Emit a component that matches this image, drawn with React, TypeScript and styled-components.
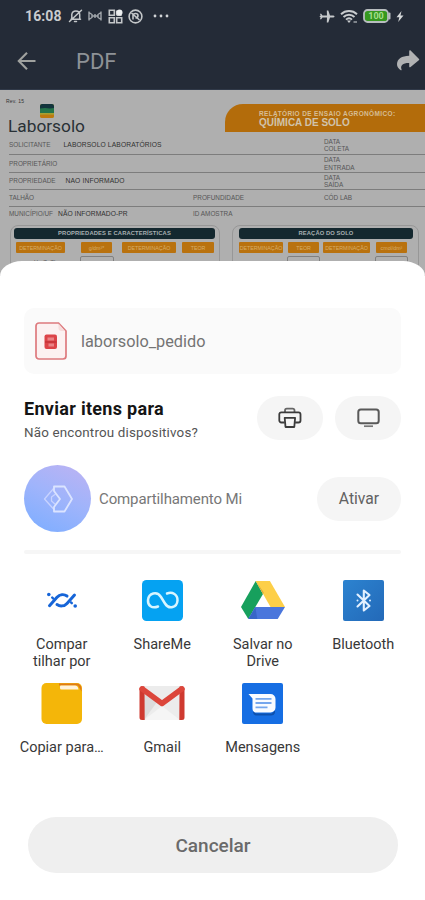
import React from "react";
import styled, { createGlobalStyle } from "styled-components";

const Global = createGlobalStyle`
  * { box-sizing: border-box; }
  body { margin: 0; background: #fff; font-family: Roboto, "Noto Sans", sans-serif; }
  button { font: inherit; border: 0; padding: 0; }
`;

const Screen = styled.div`
  width: 425px;
  height: 900px;
  overflow: hidden;
  display: flex;
  flex-direction: column;
  background: #242b37;
`;

const Text = styled.span<{ $size: number; $color?: string; $weight?: number; $track?: number; $line?: number }>`
  display: block;
  white-space: nowrap;
  font-size: ${p => p.$size}px;
  color: ${p => p.$color ?? "#444"};
  font-weight: ${p => p.$weight ?? 400};
  letter-spacing: ${p => p.$track ?? 0}px;
  line-height: ${p => p.$line ?? Math.round(p.$size * 1.2)}px;
`;

/* Status bar and app bar */
const StatusBar = styled.div`
  height: 32px;
  flex: none;
  display: flex;
  align-items: center;
  padding: 0 21px 0 25px;
`;
const StatusIcons = styled.div<{ $gap: number; $left?: number }>`
  display: flex;
  align-items: center;
  gap: ${p => p.$gap}px;
  margin-left: ${p => (p.$left === undefined ? "auto" : p.$left + "px")};
  svg { display: block; }
`;
const AppBar = styled.div`
  height: 58px;
  flex: none;
  display: flex;
  align-items: center;
  padding: 0 5px 0 17px;
  border-bottom: 1px solid #303948;
  svg { display: block; }
`;
const AppTitle = styled.div`
  flex: 1;
  margin-left: 39px;
  padding-top: 2px;
`;

/* Dimmed document */
const Doc = styled.div`
  height: 185px;
  flex: none;
  background: #afafaf;
  overflow: hidden;
  display: flex;
  flex-direction: column;
  font-family: "Liberation Sans", Arial, sans-serif;
`;
const DocTop = styled.div`
  height: 46px;
  flex: none;
  display: flex;
  justify-content: space-between;
`;
const Brand = styled.div`
  padding: 8px 0 0 6px;
  width: 100px;
`;
const BrandMark = styled.svg`
  display: block;
  margin: 0 0 0 34px;
`;
const BrandName = styled.div`
  margin: -2px 0 0 2px;
  font-family: Roboto, sans-serif;
`;
const Banner = styled.div`
  width: 200px;
  height: 28px;
  margin-top: 14px;
  padding: 6px 0 0 34px;
  background: #b36c0b;
  border-radius: 18px 0 0 0;
`;
const Field = styled.div<{ $h: number; $last?: boolean }>`
  height: ${p => p.$h}px;
  flex: none;
  margin-left: 9px;
  display: grid;
  grid-template-columns: 184px 131px 1fr;
  align-items: center;
  border-bottom: 1px solid ${p => (p.$last ? "transparent" : "#7d7d7d")};
`;
const FieldName = styled.div<{ $gap: number }>`
  display: flex;
  align-items: center;
  gap: ${p => p.$gap}px;
`;
const Panels = styled.div`
  display: flex;
  gap: 12px;
  padding: 3px 0 0 10px;
`;
const Panel = styled.div<{ $w: number; $pad: string }>`
  width: ${p => p.$w}px;
  height: 60px;
  flex: none;
  padding: ${p => p.$pad};
  border: 1px solid #979797;
  border-radius: 8px;
`;
const PanelTitle = styled.div`
  height: 11px;
  display: flex;
  align-items: center;
  justify-content: center;
  background: #14282f;
  border-radius: 3px;
`;
const Heads = styled.div<{ $cols: string }>`
  display: grid;
  grid-template-columns: ${p => p.$cols};
  margin-top: 3px;
`;
const Head = styled.div`
  height: 11px;
  display: flex;
  align-items: center;
  justify-content: center;
  overflow: hidden;
  background: #b9720f;
  border-radius: 1px;
`;
const ValueBox = styled.div`
  height: 20px;
  border: 1px solid #808080;
  border-radius: 2px;
`;
const ValueName = styled.div`
  padding: 2px 0 0 17px;
`;

/* Share sheet */
const Sheet = styled.div`
  flex: 1;
  position: relative;
  margin-top: -14px;
  padding: 47px 24px 0;
  background: #fff;
  border-radius: 22px 22px 0 0 / 15px 15px 0 0;
`;
const FileCard = styled.div`
  height: 66px;
  display: flex;
  align-items: center;
  gap: 14px;
  padding-left: 11px;
  background: #fafafa;
  border-radius: 10px;
`;
const FileName = styled.div`
  padding-top: 2px;
`;
const SendRow = styled.div`
  display: flex;
  align-items: center;
  height: 44px;
  margin-top: 22px;
`;
const SendText = styled.div`
  flex: 1;
  display: flex;
  flex-direction: column;
  gap: 5px;
  padding-top: 2px;
`;
const Pill = styled.button<{ $w: number; $left?: number }>`
  width: ${p => p.$w}px;
  height: 44px;
  margin-left: ${p => p.$left ?? 0}px;
  display: flex;
  align-items: center;
  justify-content: center;
  background: #f5f5f5;
  border-radius: 22px;
`;
const MiRow = styled.div`
  display: flex;
  align-items: center;
  height: 67px;
  margin-top: 25px;
`;
const MiBadge = styled.div`
  width: 67px;
  height: 67px;
  margin-right: 8px;
  display: flex;
  align-items: center;
  justify-content: center;
  border-radius: 50%;
  background: linear-gradient(205deg, #b9b3f4 8%, #9fb4fb 48%, #80aeff 92%);
`;
const MiName = styled.div`
  flex: 1;
`;
const Divider = styled.div`
  height: 4px;
  margin-top: 18px;
  background: #f6f6f6;
  border-radius: 2px;
`;
const Apps = styled.div`
  display: grid;
  grid-template-columns: repeat(4, 100.5px);
  grid-template-rows: 103px 104px;
  margin: 26px -12px 0 -12.5px;
`;
const AppTile = styled.div`
  display: flex;
  flex-direction: column;
  align-items: center;
  svg { display: block; }
`;
const IconSlot = styled.div`
  height: 56px;
`;
const AppLabel = styled.div`
  display: flex;
  flex-direction: column;
  align-items: center;
`;
const Cancel = styled.button`
  display: flex;
  align-items: center;
  justify-content: center;
  width: 370px;
  height: 56px;
  margin: 30px 0 0 4px;
  padding-top: 1px;
  background: #efefef;
  border-radius: 28px;
`;

const g = "#c4c7c9";

const MutedBell = () => (
  <svg width="15" height="14" viewBox="0 0 15 14" fill="none" stroke={g} strokeWidth="1.5" strokeLinecap="round" strokeLinejoin="round">
    <path d="M3 10.3h9.500M3.800 10V5.300C4.200 3 5.800 2 7.800 2c2.400 0 3.900 1.500 3.900 3.600V10M6.500 12.500h2M1.500 12.500 13.500 1.200" />
  </svg>
);
const Vibrate = () => (
  <svg width="14" height="12" viewBox="0 0 14 12" fill="none" stroke="#a3a8ad" strokeWidth="1.400">
    <path d="M1 1.500v9M13 1.500v9M1 2.500l3 2v3l-3 2M13 2.500l-3 2v3l3 2M4 6h6M7 4v4" />
  </svg>
);
const Blocks = () => (
  <svg width="15" height="15" viewBox="0 0 15 15" fill="none" stroke={g} strokeWidth="1.600">
    <path d="M1.300 1.300h5v5h-5zM1.300 8.700h5v5h-5zM8.700 8.700h5v5h-5zM8.700 6.300V1.500M8.700 6.300h5" />
    <circle cx="11.500" cy="3.500" r="3" fill="#eceeef" stroke="none" />
  </svg>
);
const Ring = () => (
  <svg width="15" height="15" viewBox="0 0 15 15" fill="none" stroke={g} strokeWidth="1.600">
    <circle cx="7.500" cy="7.500" r="6.400" />
    <path d="M5 10.500V6C5 4 10 4 10 6.500S7.500 9 7.500 9M3.500 4l8 7" />
  </svg>
);
const Dots = () => (
  <svg width="16" height="4" viewBox="0 0 16 4" fill="#d0d3d6">
    <circle cx="2" cy="2" r="1.400" /><circle cx="8" cy="2" r="1.400" /><circle cx="14" cy="2" r="1.400" />
  </svg>
);
const Plane = () => (
  <svg width="16" height="13" viewBox="0 0 16 13" fill="#c6c9cb">
    <path d="M15.500 6.500c0-.8-.9-1.100-1.800-1.100H11L9.300.5H7.800L8 5.400H3.500L2.200 3.800H1l.6 1.900L.3 6.500l1.300.8L1 9.200h1.200l1.300-1.600H8l-.2 4.900h1.500L11 7.600h2.700c.9 0 1.800-.3 1.800-1.100z" />
  </svg>
);
const Wifi = () => (
  <svg width="18" height="15" viewBox="0 0 18 15" fill="none" stroke="#c9cccf" strokeWidth="1.900">
    <path d="M1 5.200c4.500-4.300 11.500-4.300 16 0M3.500 8c3.200-3 7.800-3 11 0M6 10.600c1.800-1.600 4.200-1.600 6 0" />
    <path d="M7 11.500h4L9 14z" fill="#c9cccf" stroke="none" />
    <path d="M13.500 13h3.500" stroke="#7d838a" strokeWidth="2" />
  </svg>
);
const Battery = () => (
  <svg width="28" height="14" viewBox="0 0 28 14">
    <rect x="1" y="1" width="24" height="12" rx="3.500" fill="#36981f" stroke="#b8bdbf" strokeWidth="1.800" />
    <path d="M26.500 4.500v5" stroke="#b8bdbf" strokeWidth="2" strokeLinecap="round" />
    <text x="13" y="10.300" textAnchor="middle" fontFamily="Roboto" fontSize="9" fontWeight="700" fill="#a5df8c">100</text>
  </svg>
);
const Bolt = () => (
  <svg width="8" height="11" viewBox="0 0 8 11" fill="#d4d7d9"><path d="M5.500 0 .5 6.300h2.800L2.200 11l5.300-6.500H4.500z" /></svg>
);
const BackArrow = () => (
  <svg width="20" height="20" viewBox="0 0 20 20" fill="none" stroke="#a0a29f" strokeWidth="2.100" strokeLinejoin="miter">
    <path d="M18.500 10H2.500M10 1.800 1.800 10l8.200 8.200" />
  </svg>
);
const ShareArrow = () => (
  <svg width="24" height="21" viewBox="0 0 24 21" fill="#b1b2b3">
    <path d="M13.200 1.200v4.600C5.500 6 1.300 9 1 14c-.1 2.600 1.500 4.900 3.800 6.200.7.300 1-.2.700-.9-1.400-4 1.300-6.500 7.700-6.400v3.500c0 .9.700 1.100 1.400.5l8.200-6.700c.6-.5.6-1 0-1.500L14.600.6c-.7-.5-1.400-.3-1.400.6z" />
  </svg>
);

const Strata = () => (
  <BrandMark width="14" height="14" viewBox="0 0 14 14">
    <rect width="14" height="14" rx="2" fill="#a59b2c" />
    <path d="M0 5V2a2 2 0 0 1 2-2h10a2 2 0 0 1 2 2v3z" fill="#12343c" />
    <path d="M0 4.600 5 4l5 .600 4-.600v5L7 9 0 9z" fill="#24734a" />
    <path d="M0 9.500q3-.8 7-.2t7-.2v1.500q-4 .8-7 .2t-7 .3z" fill="#a7a334" />
    <path d="M0 10.800 7 10.500l7 .3v1.200a2 2 0 0 1-2 2H2a2 2 0 0 1-2-2z" fill="#bd790f" />
  </BrandMark>
);

const FileIcon = () => (
  <svg width="32" height="38" viewBox="0 0 32 38">
    <path d="M4 1h19.500L31 9v25a3 3 0 0 1-3 3H4a3 3 0 0 1-3-3V4a3 3 0 0 1 3-3z" fill="#fcf1f1" stroke="#dd7a7e" strokeWidth="1.700" />
    <path d="M23.500 1.500v4.500a3 3 0 0 0 3 3H30" fill="#f6dcdc" />
    <rect x="9.500" y="12.500" width="12.500" height="14.500" rx="2" fill="#dc4348" />
    <path d="M12.500 15.500h6.500v3h-6.500zM13.500 21.500h5.500v3h-5.500z" fill="#ea8386" />
    <path d="M10 20h11.500" stroke="#b92c30" strokeWidth="1" />
  </svg>
);
const Printer = () => (
  <svg width="24" height="22" viewBox="0 0 24 22" fill="none" stroke="#3b3b3b" strokeWidth="1.800" strokeLinejoin="round">
    <path d="M7 5.200V3.500A1.800 1.800 0 0 1 8.800 1.700h5.900a1.800 1.800 0 0 1 1.800 1.800v1.700" stroke="#666" />
    <path d="M6.700 15.500H3.300a2 2 0 0 1-2-2V7.300a2 2 0 0 1 2-2h17.200a2 2 0 0 1 2 2v6.200a2 2 0 0 1-2 2h-3.400" />
    <path d="M6.700 10.800h10.400l-.8 9.200H7.500z" />
  </svg>
);
const Monitor = () => (
  <svg width="23" height="20" viewBox="0 0 23 20" fill="none" stroke="#595959" strokeWidth="2">
    <rect x="1.300" y="1.500" width="20.400" height="13.800" rx="2.500" />
    <path d="M7 18.200h9" strokeWidth="1.700" stroke="#777" />
  </svg>
);
const MiMark = () => (
  <svg width="30" height="28" viewBox="0 0 30 28" fill="none" strokeLinejoin="round">
    <path d="M11 3 1.500 14 11 24.500M12.500 9 8.500 12v4l4 3.500" stroke="#c8d3ff" strokeWidth="1.300" />
    <path d="M11 1.500h10.500L29 14l-7.500 12.500H11V22l6-8-6-8z" stroke="#dbe4ff" strokeWidth="1.800" />
  </svg>
);

const Nearby = () => (
  <svg width="40" height="40" viewBox="0 0 40 40" fill="none" stroke="#1665d8" strokeWidth="3" strokeLinecap="round">
    <path d="M7.500 25.700 15 17.300c2.800-3 7-3.300 10-1.200M15 24.600c3 2 7.200 1.800 10-1.200l7.500-8.400" />
    <circle cx="6.800" cy="14.500" r="1.800" fill="#1665d8" stroke="none" />
    <circle cx="33.200" cy="26" r="1.800" fill="#1665d8" stroke="none" />
    <path d="m10.200 17.500.8.800M29 22.400l.8.800" strokeWidth="2.400" />
  </svg>
);
const ShareMe = () => (
  <svg width="41" height="41" viewBox="0 0 41 41" fill="none">
    <rect width="41" height="41" rx="4.500" fill="#05a2f2" />
    <path d="M16 26.500c-6 2.500-10.500-1-10-6.500.6-7 9-9.500 13-3l4 6.500c4 6.500 12 4 12.500-3 .3-6-5-9-10.500-7" stroke="#d8f5ff" strokeWidth="2.500" strokeLinecap="round" />
  </svg>
);
const Drive = () => (
  <svg width="44" height="40" viewBox="0 0 44 40">
    <path d="M14.700 1 0 27l7.300 12L22 14z" fill="#17a05d" />
    <path d="M14.700 1h14.200L44 27H29.500z" fill="#fdcf48" />
    <path d="M14.300 27H44l-7.300 12H7.300z" fill="#4a76dc" />
    <path d="m14.700 1 7.300 13 .8-1.500z" fill="#dcad38" />
    <path d="M7.300 39 14.300 27l2 12z" fill="#3966c8" />
  </svg>
);
const Bluetooth = () => (
  <svg width="41" height="41" viewBox="0 0 41 41" fill="none">
    <defs><linearGradient id="bt" x1="0" y1="0" x2="1" y2="1"><stop stopColor="#2c83d0" /><stop offset="1" stopColor="#2369b8" /></linearGradient></defs>
    <rect width="41" height="41" rx="2" fill="url(#bt)" />
    <path d="m14.500 14.500 12 11.500-5.700 4.500V10.500l5.700 4.500-12 11.500" stroke="#e4f1ff" strokeWidth="2.100" strokeLinejoin="round" strokeLinecap="round" />
    <circle cx="14.500" cy="20.500" r="1" fill="#dcecff" /><circle cx="27" cy="20.500" r="1" fill="#dcecff" />
  </svg>
);
const Folder = () => (
  <svg width="41" height="41" viewBox="0 0 41 41">
    <rect x=".5" width="40.500" height="41" rx="5" fill="#f4b609" />
    <path d="M18 .5h17.500a5 5 0 0 1 5 5v3L37 2.500H18z" fill="#df7a19" />
    <path d="M20 2.500h14q3 0 3.500 4H20.500q-1.500 0-1.500-1.500V3.500q0-1 1-1z" fill="#fff2d9" />
  </svg>
);
const Gmail = () => (
  <svg width="46" height="41" viewBox="0 0 46 41">
    <path d="M3 3h40v34H3z" fill="#ececec" />
    <path d="M5 37 23 23l18 14z" fill="#f5f5f5" />
    <path d="M5 10v27l13-18z" fill="#dcdcdc" />
    <path d="M.5 6.500a3.500 3.500 0 0 1 5-3L5.700 37H3a2.500 2.500 0 0 1-2.500-2.500zM45.500 6.500a3.500 3.500 0 0 0-5-3L40.300 37H43a2.500 2.500 0 0 0 2.500-2.500z" fill="#cf3a30" />
    <path d="M3 5.800 23 20.500 43 5.800" stroke="#dc463b" strokeWidth="5.500" fill="none" strokeLinejoin="round" strokeLinecap="round" />
  </svg>
);
const Messages = () => (
  <svg width="41" height="41" viewBox="0 0 41 41">
    <rect width="41" height="41" rx="2" fill="#166ee3" />
    <path d="M11 28 14 30.500h16l3-3.500v3q-1 2.500-4 2.500H14q-3-.5-3-4.500z" fill="#0d50ad" />
    <path d="M6.500 11H28.500a5 5 0 0 1 5 5v8.500a5 5 0 0 1-5 5H14.500a4 4 0 0 1-4-4V15.500z" fill="#fafcff" />
    <path d="M13.500 15.800h16M13.500 20h16M13.500 24.300h12" stroke="#76a7ed" strokeWidth="1.800" />
  </svg>
);

const doc = { $size: 6.4, $color: "#565656", $line: 7.5 };
const value = { $size: 6.7, $color: "#303030", $line: 7.5 };

const apps: { icon: React.ReactNode; lines: string[] }[] = [
  { icon: <Nearby />, lines: ["Compar", "tilhar por"] },
  { icon: <ShareMe />, lines: ["ShareMe"] },
  { icon: <Drive />, lines: ["Salvar no", "Drive"] },
  { icon: <Bluetooth />, lines: ["Bluetooth"] },
  { icon: <Folder />, lines: ["Copiar para…"] },
  { icon: <Gmail />, lines: ["Gmail"] },
  { icon: <Messages />, lines: ["Mensagens"] },
];

const DateCell = ({ sub }: { sub: string }) => (
  <div>
    <Text {...doc}>DATA</Text>
    <Text {...doc}>{sub}</Text>
  </div>
);

export default function App() {
  return (
    <Screen>
      <Global />
      <StatusBar>
        <Text $size={14} $color="#c9cccf" $weight={700} $track={0.1}>16:08</Text>
        <StatusIcons $gap={5.5} $left={6}>
          <MutedBell /><Vibrate /><Blocks /><Ring />
        </StatusIcons>
        <StatusIcons $gap={0} $left={9.5}><Dots /></StatusIcons>
        <StatusIcons $gap={5}><Plane /><Wifi /><Battery /><Bolt /></StatusIcons>
      </StatusBar>
      <AppBar>
        <BackArrow />
        <AppTitle><Text $size={22} $color="#8e9296">PDF</Text></AppTitle>
        <ShareArrow />
      </AppBar>
      <Doc>
        <DocTop>
          <Brand>
            <Text $size={5} $color="#333" $line={6} $track={0.2}>Rev. 15</Text>
            <Strata />
            <BrandName><Text $size={17.3} $color="#293136" $line={20}>Laborsolo</Text></BrandName>
          </Brand>
          <Banner>
            <Text $size={6.5} $color="#d6bd94" $weight={700} $line={7} $track={0.36}>RELATÓRIO DE ENSAIO AGRONÔMICO:</Text>
            <Text $size={10} $color="#d0c3ab" $weight={700} $line={12}>QUÍMICA DE SOLO</Text>
          </Banner>
        </DocTop>
        <Field $h={19}>
          <FieldName $gap={13}><Text {...doc}>SOLICITANTE</Text><Text {...value} $track={0.13}>LABORSOLO LABORATÓRIOS</Text></FieldName>
          <span /><DateCell sub="COLETA" />
        </Field>
        <Field $h={18}>
          <Text {...doc}>PROPRIETÁRIO</Text><span /><DateCell sub="ENTRADA" />
        </Field>
        <Field $h={17}>
          <FieldName $gap={10}><Text {...doc}>PROPRIEDADE</Text><Text {...value} $track={0.15}>NAO INFORMADO</Text></FieldName>
          <span /><DateCell sub="SAÍDA" />
        </Field>
        <Field $h={17}>
          <Text {...doc}>TALHÃO</Text><Text {...doc}>PROFUNDIDADE</Text><Text {...doc}>CÓD LAB</Text>
        </Field>
        <Field $h={15} $last>
          <FieldName $gap={5}><Text {...doc}>MUNICÍPIO/UF</Text><Text {...value} $track={0.05}>NÃO INFORMADO-PR</Text></FieldName>
          <Text {...doc}>ID AMOSTRA</Text>
        </Field>
        <Panels>
          <Panel $w={210} $pad="2px 4px 0 3px">
            <PanelTitle><Text $size={5.8} $color="#a8b0b2" $weight={700} $track={0.13}>PROPRIEDADES E CARACTERÍSTICAS</Text></PanelTitle>
            <Heads $cols="2px 49px 16px 31px 10px 54px 6px 32px">
              <span /><Head><Text $size={5.3} $color="#d7ae69">DETERMINAÇÃO</Text></Head>
              <span /><Head><Text $size={5.3} $color="#d7ae69">g/dm³*</Text></Head>
              <span /><Head><Text $size={5.3} $color="#d7ae69">DETERMINAÇÃO</Text></Head>
              <span /><Head><Text $size={5.3} $color="#d7ae69">TEOR</Text></Head>
            </Heads>
            <Heads $cols="66px 34px">
              <ValueName><Text $size={5.5} $color="#555" $line={8}>pH - CaCl₂</Text></ValueName><ValueBox />
            </Heads>
          </Panel>
          <Panel $w={187} $pad="2px 5px 0 6px">
            <PanelTitle><Text $size={5.8} $color="#a8b0b2" $weight={700} $track={0.1}>REAÇÃO DO SOLO</Text></PanelTitle>
            <Heads $cols="44px 5px 31px 4px 47px 6px 31px">
              <Head><Text $size={5.3} $color="#d7ae69">DETERMINAÇÃO</Text></Head>
              <span /><Head><Text $size={5.3} $color="#d7ae69">TEOR</Text></Head>
              <span /><Head><Text $size={5.3} $color="#d7ae69">DETERMINAÇÃO</Text></Head>
              <span /><Head><Text $size={5.3} $color="#d7ae69">cmol/dm³</Text></Head>
            </Heads>
            <Heads $cols="48px 33px 55px 33px">
              <span /><ValueBox /><span /><ValueBox />
            </Heads>
          </Panel>
        </Panels>
      </Doc>
      <Sheet>
        <FileCard>
          <FileIcon />
          <FileName><Text $size={16.3} $color="#747474" $line={18}>laborsolo_pedido</Text></FileName>
        </FileCard>
        <SendRow>
          <SendText>
            <Text $size={18} $color="#151515" $weight={700} $line={22} $track={0.3}>Enviar itens para</Text>
            <Text $size={13.4} $color="#555" $line={16} $track={0.17}>Não encontrou dispositivos?</Text>
          </SendText>
          <Pill $w={66} aria-label="Imprimir"><Printer /></Pill>
          <Pill $w={66} $left={12} aria-label="Transmitir"><Monitor /></Pill>
        </SendRow>
        <MiRow>
          <MiBadge><MiMark /></MiBadge>
          <MiName><Text $size={15} $color="#777" $track={-0.12} $line={20}>Compartilhamento Mi</Text></MiName>
          <Pill $w={84}><Text $size={15.7} $color="#626262" $line={18}>Ativar</Text></Pill>
        </MiRow>
        <Divider />
        <Apps>
          {apps.map(a => (
            <AppTile key={a.lines[0]}>
              <IconSlot>{a.icon}</IconSlot>
              <AppLabel>
                {a.lines.map(l => <Text key={l} $size={14.5} $color="#383838" $line={17}>{l}</Text>)}
              </AppLabel>
            </AppTile>
          ))}
        </Apps>
        <Cancel><Text $size={19} $color="#6a6a6a" $weight={500}>Cancelar</Text></Cancel>
      </Sheet>
    </Screen>
  );
}
